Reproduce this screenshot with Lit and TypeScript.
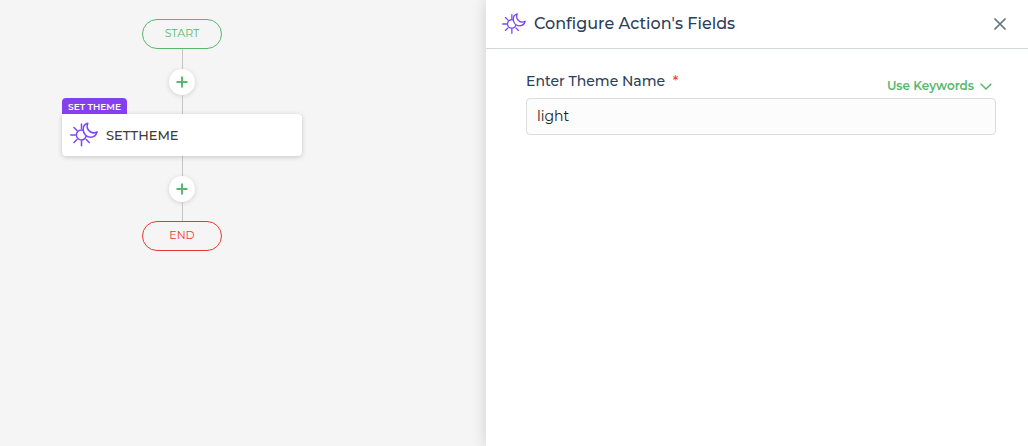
import { LitElement, html, css } from "lit";
import { customElement, property, state } from "lit/decorators.js";

@customElement("theme-icon")
class ThemeIcon extends LitElement {
  static styles = css`
    :host { display: inline-flex; flex: none; width: 28px; height: 28px; }
    svg { width: 100%; height: 100%; fill: none; stroke: #7b45f5; stroke-width: 1.5; stroke-linecap: round; stroke-linejoin: round; }
  `;
  render() {
    return html`<svg viewBox="0 0 28 28" aria-hidden="true">
      <path d="M13.2 9.3A5 5 0 1 0 16.1 15.6" />
      <path d="M11.5 3v4.600M11.5 20.2v4.600M.8 14h4.500M4 6.500l3 3M4 21.500l3-3M19.200 21.500l-3-3" />
      <path d="M17.800 2.200C14.800 3 13 5.700 13.200 8.900C13.500 13 16.400 16.200 20.300 16.200C23.600 16.200 26.300 13.900 27 10.800C24.500 12.300 21.400 12 19.200 9.900C17.100 7.800 16.700 4.700 17.800 2.200Z" />
    </svg>`;
  }
}

@customElement("add-step")
class AddStep extends LitElement {
  static styles = css`
    :host { display: flex; flex-direction: column; align-items: center; }
    .line { width: 1px; height: 20px; background: #c6c6c6; }
    .line:last-child { height: 19px; }
    .add { display: grid; place-items: center; width: 26px; height: 26px; padding: 0; border: 0; border-radius: 50%; background: #fff; box-shadow: 0 1px 5px rgba(0, 0, 0, 0.15); cursor: pointer; }
    svg { width: 12px; height: 12px; stroke: #57b86e; stroke-width: 2; }
  `;
  render() {
    return html`<span class="line"></span>
      <button class="add" aria-label="Add step"><svg viewBox="0 0 12 12"><path d="M6 .5v11M.5 6h11" /></svg></button>
      <span class="line"></span>`;
  }
}

@customElement("flow-canvas")
class FlowCanvas extends LitElement {
  static styles = css`
    :host { display: block; padding: 19px 62px; }
    .flow { display: flex; flex-direction: column; align-items: center; width: 240px; }
    .end { box-sizing: border-box; width: 80px; height: 30px; padding: 0; border: 1px solid; border-radius: 15px; font-size: 11px; line-height: 26px; text-align: center; }
    .green { color: #57b86e; }
    .red { color: #ea3a2d; }
    .card { position: relative; box-sizing: border-box; display: flex; align-items: center; gap: 8px; width: 100%; height: 42px; padding: 0 8px; border: 0; border-radius: 0 4px 4px 4px; background: #fff; box-shadow: 0 1px 5px rgba(0, 0, 0, 0.2); font: 500 13px/20px Montserrat, Inter, sans-serif; color: #3c3c3c; text-align: left; cursor: pointer; }
    .tag { position: absolute; left: 0; bottom: 100%; padding: 1px 6px 0; border-radius: 4px 4px 0 0; background: #8440f0; color: #fff; font-size: 9px; font-weight: 600; line-height: 15px; white-space: nowrap; }
  `;
  render() {
    return html`<div class="flow">
      <div class="end green">START</div>
      <add-step></add-step>
      <button class="card"><span class="tag">SET THEME</span><theme-icon></theme-icon><span>SETTHEME</span></button>
      <add-step></add-step>
      <div class="end red">END</div>
    </div>`;
  }
}

@customElement("config-panel")
class ConfigPanel extends LitElement {
  @property() heading = "Configure Action's Fields";
  @state() private value = "light";

  static styles = css`
    :host { display: block; background: #fff; box-shadow: 0 0 14px rgba(0, 0, 0, 0.16); color: #2c405a; }
    .head { display: flex; align-items: center; gap: 8px; height: 48px; padding: 0 16px; border-bottom: 1px solid #d0d8dc; }
    .head theme-icon { width: 24px; height: 24px; }
    h1 { flex: 1; margin: 0; font-size: 16px; font-weight: 500; line-height: 24px; }
    button { padding: 0; border: 0; background: none; font: inherit; cursor: pointer; }
    .close { display: flex; padding: 0 6px 0 0; }
    .close svg { width: 12px; height: 12px; stroke: #6f7b85; stroke-width: 1.7; }
    .body { padding: 20px 32px 20px 40px; }
    .row { display: flex; justify-content: space-between; align-items: flex-start; padding-bottom: 3px; }
    label { font-size: 14px; font-weight: 500; line-height: 24px; }
    .star { padding-left: 4px; color: #f44336; }
    .keywords { display: flex; align-items: center; gap: 6px; padding: 8px 4px 0 0; color: #57b86e; font-size: 12px; font-weight: 600; line-height: 18px; }
    .keywords svg { width: 12px; height: 7px; fill: none; stroke: currentColor; stroke-width: 1.5; }
    input { box-sizing: border-box; display: block; width: 100%; height: 37px; padding: 0 10px 2px; border: 1px solid #dadcde; border-radius: 4px; background: #fcfcfc; color: #202020; font: 400 14px/20px Montserrat, Inter, sans-serif; outline: 0; }
    input:focus { border-color: #57b86e; }
  `;
  render() {
    return html`<header class="head">
        <theme-icon></theme-icon>
        <h1>${this.heading}</h1>
        <button class="close" aria-label="Close"><svg viewBox="0 0 12 12"><path d="M.5 .5l11 11M11.5 .5l-11 11" /></svg></button>
      </header>
      <div class="body">
        <div class="row">
          <label for="theme">Enter Theme Name <span class="star">*</span></label>
          <button class="keywords">Use Keywords <svg viewBox="0 0 12 7"><path d="M.7 .7L6 6L11.300 .7" /></svg></button>
        </div>
        <input id="theme" type="text" .value=${this.value}
          @input=${(e: Event) => (this.value = (e.target as HTMLInputElement).value)} />
      </div>`;
  }
}

@customElement("app-root")
class AppRoot extends LitElement {
  static styles = css`
    :host { display: grid; grid-template-columns: minmax(364px, 1fr) minmax(0, 542px); min-height: 100vh; background: #f5f5f5; font-family: Montserrat, Inter, sans-serif; overflow: hidden; }
  `;
  render() {
    return html`<flow-canvas></flow-canvas><config-panel></config-panel>`;
  }
}
